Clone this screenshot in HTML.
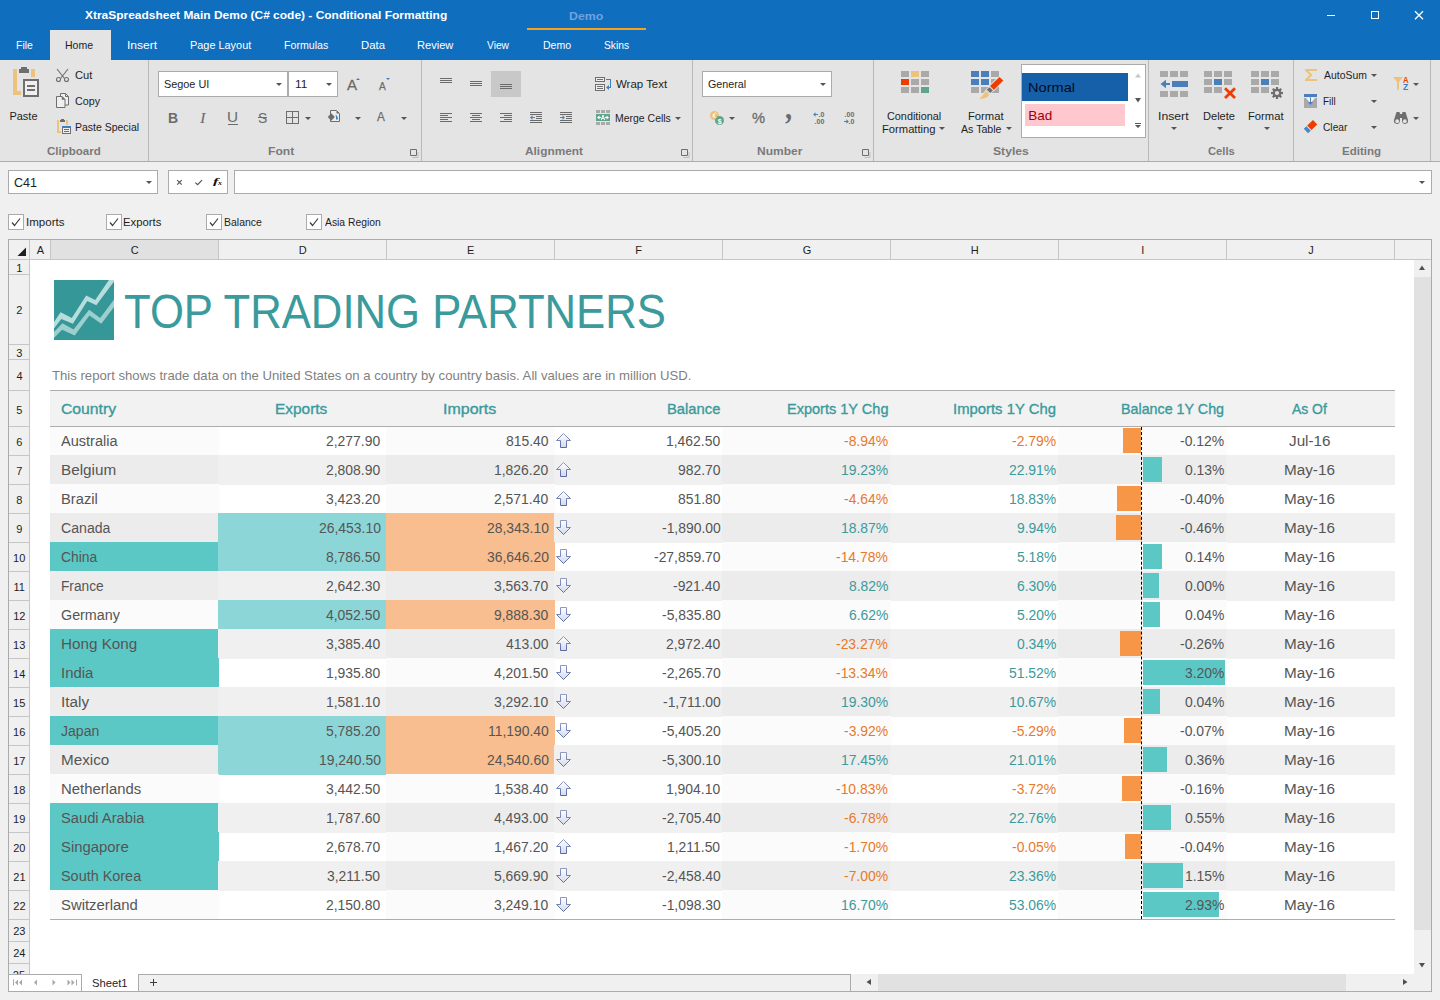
<!DOCTYPE html>
<html lang="en">
<head>
<meta charset="utf-8">
<title>XtraSpreadsheet Main Demo (C# code) - Conditional Formatting</title>
<style>
html,body{margin:0;padding:0;}
body{width:1440px;height:1000px;overflow:hidden;background:#f0f0f0;font-family:'Liberation Sans', sans-serif;position:relative;}
div,span,svg,h1,p,label,button,section,header,footer,nav{position:absolute;margin:0;padding:0;box-sizing:border-box;}
section,header,footer,nav{left:0;top:0;}
.t{white-space:nowrap;line-height:20px;height:20px;transform-origin:0 0;font-weight:normal;}
svg{overflow:visible;}
</style>
</head>
<body>
<header>
<div style="left:0px;top:0px;width:1440px;height:60px;background:#106ebe;"></div>
<h1 class="t" style="left:84.89px;top:5px;font-size:11px;color:#fff;font-weight:bold;transform:scaleX(1.0874);">XtraSpreadsheet Main Demo (C# code) - Conditional Formatting</h1>
<span class="t" style="left:569.17px;top:6px;font-size:11px;color:#6ea3e0;font-weight:bold;transform:scaleX(1.1226);">Demo</span>
<div style="left:527px;top:28px;width:119px;height:2px;background:#f5a31c;"></div>
<svg style="left:1320px;top:5px;" width="110" height="20" viewBox="0 0 110 20"><path d="M7 10.5h8" stroke="#fff" stroke-width="1" fill="none"/><rect x="51.5" y="6.5" width="7" height="7" stroke="#fff" stroke-width="1" fill="none"/><path d="M95 6.200l8 8M103 6.200l-8 8" stroke="#fff" stroke-width="1.300" fill="none"/></svg>
<nav>
<div style="left:50px;top:30px;width:61px;height:30px;background:#e4e4e4;"></div>
<span class="t" style="left:15.64px;top:35px;font-size:11px;color:#fff;transform:scaleX(0.9490);">File</span>
<span class="t" style="left:65.39px;top:35px;font-size:11px;color:#1e1e1e;transform:scaleX(0.9570);">Home</span>
<span class="t" style="left:126.89px;top:35px;font-size:11px;color:#fff;transform:scaleX(1.0979);">Insert</span>
<span class="t" style="left:189.61px;top:35px;font-size:11px;color:#fff;transform:scaleX(0.9911);">Page Layout</span>
<span class="t" style="left:283.63px;top:35px;font-size:11px;color:#fff;transform:scaleX(0.9654);">Formulas</span>
<span class="t" style="left:360.57px;top:35px;font-size:11px;color:#fff;transform:scaleX(1.0299);">Data</span>
<span class="t" style="left:417.34px;top:35px;font-size:11px;color:#fff;transform:scaleX(1.0088);">Review</span>
<span class="t" style="left:487.45px;top:35px;font-size:11px;color:#fff;transform:scaleX(0.9313);">View</span>
<span class="t" style="left:542.89px;top:35px;font-size:11px;color:#fff;transform:scaleX(0.9561);">Demo</span>
<span class="t" style="left:604.03px;top:35px;font-size:11px;color:#fff;transform:scaleX(0.9326);">Skins</span>
</nav>
</header>
<section>
<div style="left:0px;top:60px;width:1440px;height:101px;background:#e4e4e4;"></div>
<div style="left:0px;top:161px;width:1440px;height:1px;background:#adadad;"></div>
<div style="left:148px;top:60px;width:1px;height:101px;background:#b9b9b9;"></div>
<div style="left:421px;top:60px;width:1px;height:101px;background:#b9b9b9;"></div>
<div style="left:692px;top:60px;width:1px;height:101px;background:#b9b9b9;"></div>
<div style="left:873px;top:60px;width:1px;height:101px;background:#b9b9b9;"></div>
<div style="left:1148px;top:60px;width:1px;height:101px;background:#b9b9b9;"></div>
<div style="left:1293px;top:60px;width:1px;height:101px;background:#b9b9b9;"></div>
<div style="left:1430px;top:60px;width:1px;height:101px;background:#b9b9b9;"></div>
<span class="t" style="left:46.73px;top:141px;font-size:11px;color:#7a7a7a;font-weight:bold;transform:scaleX(1.0467);">Clipboard</span>
<span class="t" style="left:268.19px;top:141px;font-size:11px;color:#7a7a7a;font-weight:bold;transform:scaleX(1.1024);">Font</span>
<span class="t" style="left:525.10px;top:141px;font-size:11px;color:#7a7a7a;font-weight:bold;transform:scaleX(1.0793);">Alignment</span>
<span class="t" style="left:757.20px;top:141px;font-size:11px;color:#7a7a7a;font-weight:bold;transform:scaleX(1.0920);">Number</span>
<span class="t" style="left:992.55px;top:141px;font-size:11px;color:#7a7a7a;font-weight:bold;transform:scaleX(1.1062);">Styles</span>
<span class="t" style="left:1207.54px;top:141px;font-size:11px;color:#7a7a7a;font-weight:bold;transform:scaleX(1.0201);">Cells</span>
<span class="t" style="left:1342.43px;top:141px;font-size:11px;color:#7a7a7a;font-weight:bold;transform:scaleX(1.0475);">Editing</span>
<svg style="left:410px;top:149px;" width="9" height="9" viewBox="0 0 9 9"><path d="M0.5 0.5h6v6h-6z" fill="none" stroke="#6e6e6e"/><path d="M8 3v5.5h-5.5" fill="none" stroke="#bdbdbd"/></svg>
<svg style="left:681px;top:149px;" width="9" height="9" viewBox="0 0 9 9"><path d="M0.5 0.5h6v6h-6z" fill="none" stroke="#6e6e6e"/><path d="M8 3v5.5h-5.5" fill="none" stroke="#bdbdbd"/></svg>
<svg style="left:862px;top:149px;" width="9" height="9" viewBox="0 0 9 9"><path d="M0.5 0.5h6v6h-6z" fill="none" stroke="#6e6e6e"/><path d="M8 3v5.5h-5.5" fill="none" stroke="#bdbdbd"/></svg>
<span class="t" style="left:9.40px;top:106px;font-size:11px;color:#1e1e1e;">Paste</span>
<span class="t" style="left:75.23px;top:65px;font-size:11px;color:#1e1e1e;transform:scaleX(1.0134);">Cut</span>
<span class="t" style="left:75.25px;top:91px;font-size:11px;color:#1e1e1e;transform:scaleX(0.9761);">Copy</span>
<span class="t" style="left:74.94px;top:117px;font-size:11px;color:#1e1e1e;transform:scaleX(0.9524);">Paste Special</span>
<div style="left:158px;top:71px;width:130px;height:26px;background:#fff;border:1px solid #ababab;"></div>
<div style="left:288px;top:71px;width:50px;height:26px;background:#fff;border:1px solid #ababab;border-left:1px solid #ababab;"></div>
<span class="t" style="left:164.21px;top:74px;font-size:11px;color:#1e1e1e;transform:scaleX(0.9876);">Segoe UI</span>
<span class="t" style="left:295.10px;top:74px;font-size:11px;color:#1e1e1e;transform:scaleX(1.0753);">11</span>
<svg style="left:276.0px;top:83.0px;" width="6" height="3.0" viewBox="0 0 6 3.0"><path d="M0 0h6l-3.0 3.0z" fill="#555"/></svg>
<svg style="left:326.0px;top:83.0px;" width="6" height="3.0" viewBox="0 0 6 3.0"><path d="M0 0h6l-3.0 3.0z" fill="#555"/></svg>
<span class="t" style="left:167.87px;top:108px;font-size:15px;color:#6b6b6b;font-weight:bold;transform:scaleX(0.9292);">B</span>
<span class="t" style="left:200.06px;top:108px;font-size:15.5px;color:#6b6b6b;font-style:italic;font-family:'Liberation Serif',serif;transform:scaleX(1.0639);">I</span>
<span class="t" style="left:227.42px;top:107px;font-size:14px;color:#6b6b6b;transform:scaleX(1.0943);">U</span>
<div style="left:228px;top:124px;width:10px;height:1px;background:#6b6b6b;"></div>
<span class="t" style="left:257.97px;top:108px;font-size:15px;color:#6b6b6b;transform:scaleX(0.9264);">S</span>
<div style="left:258px;top:117px;width:9px;height:1px;background:#6b6b6b;"></div>
<svg style="left:305.0px;top:117.0px;" width="6" height="3.0" viewBox="0 0 6 3.0"><path d="M0 0h6l-3.0 3.0z" fill="#555"/></svg>
<svg style="left:355.0px;top:117.0px;" width="6" height="3.0" viewBox="0 0 6 3.0"><path d="M0 0h6l-3.0 3.0z" fill="#555"/></svg>
<svg style="left:401.0px;top:117.0px;" width="6" height="3.0" viewBox="0 0 6 3.0"><path d="M0 0h6l-3.0 3.0z" fill="#555"/></svg>
<div style="left:491px;top:71px;width:30px;height:26px;background:#c8c8c8;"></div>
<svg style="left:0px;top:0px;" width="1440" height="160" viewBox="0 0 1440 160"><rect x="440" y="78" width="12" height="1" fill="#6b6b6b"/><rect x="440" y="80" width="12" height="1" fill="#6b6b6b"/><rect x="440" y="82" width="12" height="1" fill="#6b6b6b"/><rect x="470" y="81" width="12" height="1" fill="#6b6b6b"/><rect x="470" y="83" width="12" height="1" fill="#6b6b6b"/><rect x="470" y="85" width="12" height="1" fill="#6b6b6b"/><rect x="500" y="84" width="12" height="1" fill="#6b6b6b"/><rect x="500" y="86" width="12" height="1" fill="#6b6b6b"/><rect x="500" y="88" width="12" height="1" fill="#6b6b6b"/><rect x="440" y="113" width="12" height="1" fill="#6b6b6b"/><rect x="440" y="115" width="8" height="1" fill="#6b6b6b"/><rect x="440" y="117" width="12" height="1" fill="#6b6b6b"/><rect x="440" y="119" width="8" height="1" fill="#6b6b6b"/><rect x="440" y="121" width="12" height="1" fill="#6b6b6b"/><rect x="470" y="113" width="12" height="1" fill="#6b6b6b"/><rect x="472" y="115" width="8" height="1" fill="#6b6b6b"/><rect x="470" y="117" width="12" height="1" fill="#6b6b6b"/><rect x="472" y="119" width="8" height="1" fill="#6b6b6b"/><rect x="470" y="121" width="12" height="1" fill="#6b6b6b"/><rect x="500" y="113" width="12" height="1" fill="#6b6b6b"/><rect x="504" y="115" width="8" height="1" fill="#6b6b6b"/><rect x="500" y="117" width="12" height="1" fill="#6b6b6b"/><rect x="504" y="119" width="8" height="1" fill="#6b6b6b"/><rect x="500" y="121" width="12" height="1" fill="#6b6b6b"/><rect x="530" y="112" width="12" height="1" fill="#6b6b6b"/><rect x="530" y="114" width="12" height="1" fill="#6b6b6b"/><rect x="536" y="116" width="6" height="1" fill="#6b6b6b"/><rect x="536" y="118" width="6" height="1" fill="#6b6b6b"/><rect x="530" y="120" width="12" height="1" fill="#6b6b6b"/><rect x="530" y="122" width="12" height="1" fill="#6b6b6b"/><path d="M530 117.5l2.500-2.500v2h2.500v1h-2.500v2z" fill="#4a86c6"/><rect x="560" y="112" width="12" height="1" fill="#6b6b6b"/><rect x="560" y="114" width="12" height="1" fill="#6b6b6b"/><rect x="566" y="116" width="6" height="1" fill="#6b6b6b"/><rect x="566" y="118" width="6" height="1" fill="#6b6b6b"/><rect x="560" y="120" width="12" height="1" fill="#6b6b6b"/><rect x="560" y="122" width="12" height="1" fill="#6b6b6b"/><path d="M565 117.5l-2.500-2.500v2h-2.500v1h2.500v2z" fill="#4a86c6"/></svg>
<span class="t" style="left:615.75px;top:74px;font-size:11px;color:#1e1e1e;transform:scaleX(1.0410);">Wrap Text</span>
<span class="t" style="left:614.94px;top:108px;font-size:11px;color:#1e1e1e;transform:scaleX(0.9515);">Merge Cells</span>
<svg style="left:675.0px;top:117.0px;" width="6" height="3.0" viewBox="0 0 6 3.0"><path d="M0 0h6l-3.0 3.0z" fill="#555"/></svg>
<div style="left:702px;top:71px;width:130px;height:26px;background:#fff;border:1px solid #ababab;"></div>
<span class="t" style="left:707.96px;top:74px;font-size:11px;color:#1e1e1e;transform:scaleX(0.9750);">General</span>
<svg style="left:820.0px;top:83.0px;" width="6" height="3.0" viewBox="0 0 6 3.0"><path d="M0 0h6l-3.0 3.0z" fill="#555"/></svg>
<svg style="left:729.0px;top:117.0px;" width="6" height="3.0" viewBox="0 0 6 3.0"><path d="M0 0h6l-3.0 3.0z" fill="#555"/></svg>
<span class="t" style="left:752.48px;top:108px;font-size:15.5px;color:#6b6b6b;transform:scaleX(0.9466);-webkit-text-stroke:0.3px #6b6b6b;">%</span>
<span class="t" style="left:785.33px;top:99px;font-size:31px;color:#6b6b6b;font-weight:bold;font-family:'Liberation Serif',serif;transform:scaleX(0.9090);">,</span>
<span class="t" style="left:886.85px;top:106px;font-size:11px;color:#1e1e1e;transform:scaleX(0.9862);">Conditional</span>
<span class="t" style="left:881.58px;top:119px;font-size:11px;color:#1e1e1e;transform:scaleX(1.0184);">Formatting</span>
<svg style="left:939.0px;top:127.0px;" width="6" height="3.0" viewBox="0 0 6 3.0"><path d="M0 0h6l-3.0 3.0z" fill="#555"/></svg>
<span class="t" style="left:968.28px;top:106px;font-size:11px;color:#1e1e1e;transform:scaleX(1.0220);">Format</span>
<span class="t" style="left:960.98px;top:119px;font-size:11px;color:#1e1e1e;transform:scaleX(0.9645);">As Table</span>
<svg style="left:1006.0px;top:127.0px;" width="6" height="3.0" viewBox="0 0 6 3.0"><path d="M0 0h6l-3.0 3.0z" fill="#555"/></svg>
<div style="left:1021px;top:64px;width:125px;height:74px;background:#fff;border:1px solid #ababab;"></div>
<div style="left:1022px;top:73px;width:106px;height:28px;background:#1560a8;"></div>
<span class="t" style="left:1028.20px;top:78px;font-size:13.5px;color:#030c1c;transform:scaleX(1.0796);">Normal</span>
<div style="left:1025px;top:104px;width:100px;height:22px;background:#ffc7ce;"></div>
<span class="t" style="left:1028.29px;top:106px;font-size:13.5px;color:#9c0006;">Bad</span>
<svg style="left:0px;top:0px;" width="1440" height="160" viewBox="0 0 1440 160"><path d="M1135 77.5l3-4l3 4z" fill="#c6c6c6"/><path d="M1135 98h6l-3 4.500z" fill="#555"/><path d="M1135 123h6v1h-6z M1135 125h6l-3 3z" fill="#555"/></svg>
<span class="t" style="left:1157.57px;top:106px;font-size:11px;color:#1e1e1e;transform:scaleX(1.1092);">Insert</span>
<span class="t" style="left:1202.79px;top:106px;font-size:11px;color:#1e1e1e;transform:scaleX(1.0064);">Delete</span>
<span class="t" style="left:1248.48px;top:106px;font-size:11px;color:#1e1e1e;transform:scaleX(1.0191);">Format</span>
<svg style="left:1171.0px;top:127.0px;" width="6" height="3.0" viewBox="0 0 6 3.0"><path d="M0 0h6l-3.0 3.0z" fill="#555"/></svg>
<svg style="left:1217.0px;top:127.0px;" width="6" height="3.0" viewBox="0 0 6 3.0"><path d="M0 0h6l-3.0 3.0z" fill="#555"/></svg>
<svg style="left:1264.0px;top:127.0px;" width="6" height="3.0" viewBox="0 0 6 3.0"><path d="M0 0h6l-3.0 3.0z" fill="#555"/></svg>
<span class="t" style="left:1323.88px;top:65px;font-size:11px;color:#1e1e1e;transform:scaleX(0.9483);">AutoSum</span>
<span class="t" style="left:1323.09px;top:91px;font-size:11px;color:#1e1e1e;transform:scaleX(0.8943);">Fill</span>
<span class="t" style="left:1323.38px;top:117px;font-size:11px;color:#1e1e1e;transform:scaleX(0.9278);">Clear</span>
<svg style="left:1371.0px;top:74.0px;" width="6" height="3.0" viewBox="0 0 6 3.0"><path d="M0 0h6l-3.0 3.0z" fill="#555"/></svg>
<svg style="left:1371.0px;top:100.0px;" width="6" height="3.0" viewBox="0 0 6 3.0"><path d="M0 0h6l-3.0 3.0z" fill="#555"/></svg>
<svg style="left:1371.0px;top:126.0px;" width="6" height="3.0" viewBox="0 0 6 3.0"><path d="M0 0h6l-3.0 3.0z" fill="#555"/></svg>
<svg style="left:1413.0px;top:83.0px;" width="6" height="3.0" viewBox="0 0 6 3.0"><path d="M0 0h6l-3.0 3.0z" fill="#555"/></svg>
<svg style="left:1413.0px;top:117.0px;" width="6" height="3.0" viewBox="0 0 6 3.0"><path d="M0 0h6l-3.0 3.0z" fill="#555"/></svg>
<svg style="left:0px;top:0px;" width="1440" height="160" viewBox="0 0 1440 160"><g shape-rendering="crispEdges"><rect x="13" y="69" width="4" height="26" fill="#ecc27c"/><rect x="13" y="91" width="8" height="4" fill="#ecc27c"/><rect x="31" y="69" width="4" height="8" fill="#ecc27c"/><rect x="21" y="67" width="6" height="2" fill="#6e6e6e"/><rect x="19" y="69" width="10" height="4" fill="#6e6e6e"/><rect x="23" y="79" width="16" height="18" fill="#6e6e6e"/><rect x="25" y="81" width="12" height="14" fill="#efefef"/><rect x="27" y="85" width="8" height="2" fill="#6e6e6e"/><rect x="27" y="89" width="8" height="2" fill="#6e6e6e"/><rect x="57" y="120" width="2" height="13" fill="#ecc27c"/><rect x="57" y="131" width="4" height="2" fill="#ecc27c"/><rect x="66" y="120" width="2" height="5" fill="#ecc27c"/><rect x="61" y="119" width="3" height="1" fill="#6e6e6e"/><rect x="60" y="120" width="5" height="2" fill="#6e6e6e"/><rect x="62" y="126" width="9" height="8" fill="#6e6e6e"/><rect x="63" y="128" width="7" height="5" fill="#efefef"/><rect x="62" y="126" width="9" height="2" fill="#3f7fc1"/><rect x="64" y="129" width="5" height="1" fill="#6e6e6e"/><rect x="64" y="131" width="5" height="1" fill="#6e6e6e"/><path d="M286.5 111.5h12v12h-12zM292.5 111.5v12M286.5 117.5h12" fill="none" stroke="#6e6e6e"/><rect x="595.5" y="77.5" width="9" height="4" fill="#efefef" stroke="#6e6e6e"/><rect x="597" y="79" width="6" height="1" fill="#6e6e6e"/><rect x="595.5" y="84.5" width="9" height="6" fill="#efefef" stroke="#6e6e6e"/><rect x="597" y="86" width="6" height="1" fill="#6e6e6e"/><rect x="597" y="88" width="6" height="1" fill="#6e6e6e"/><path d="M606 79.5h4.5v8h-3" fill="none" stroke="#3f7fc1"/><rect x="596" y="110" width="4" height="3" fill="#a9a9a9"/><rect x="601" y="110" width="4" height="3" fill="#a9a9a9"/><rect x="606" y="110" width="4" height="3" fill="#a9a9a9"/><rect x="596" y="122" width="4" height="3" fill="#a9a9a9"/><rect x="601" y="122" width="4" height="3" fill="#a9a9a9"/><rect x="606" y="122" width="4" height="3" fill="#a9a9a9"/><rect x="596" y="114" width="14" height="7" fill="#5fa58c"/><rect x="901" y="71" width="8" height="6" fill="#a9a9a9"/><rect x="911" y="71" width="8" height="6" fill="#ecc27c"/><rect x="921" y="71" width="8" height="6" fill="#a9a9a9"/><rect x="901" y="79" width="8" height="6" fill="#ee3d00"/><rect x="911" y="79" width="8" height="6" fill="#a9a9a9"/><rect x="921" y="79" width="8" height="6" fill="#a9a9a9"/><rect x="901" y="87" width="8" height="6" fill="#a9a9a9"/><rect x="911" y="87" width="8" height="6" fill="#a9a9a9"/><rect x="921" y="87" width="8" height="6" fill="#5fa58c"/><rect x="971" y="71" width="8" height="6" fill="#4a7fbc"/><rect x="981" y="71" width="8" height="6" fill="#4a7fbc"/><rect x="991" y="71" width="8" height="6" fill="#a9a9a9"/><rect x="971" y="79" width="8" height="6" fill="#4a7fbc"/><rect x="981" y="79" width="8" height="6" fill="#4a7fbc"/><rect x="991" y="79" width="8" height="6" fill="#a9a9a9"/><rect x="971" y="87" width="8" height="6" fill="#a9a9a9"/><rect x="981" y="87" width="8" height="6" fill="#a9a9a9"/><rect x="991" y="87" width="8" height="6" fill="#a9a9a9"/><rect x="1160" y="71" width="8" height="6" fill="#a9a9a9"/><rect x="1170" y="71" width="8" height="6" fill="#a9a9a9"/><rect x="1180" y="71" width="8" height="6" fill="#a9a9a9"/><rect x="1160" y="91" width="8" height="6" fill="#a9a9a9"/><rect x="1170" y="91" width="8" height="6" fill="#a9a9a9"/><rect x="1180" y="91" width="8" height="6" fill="#a9a9a9"/><rect x="1172" y="81" width="16" height="6" fill="#4a7fbc"/><rect x="1165" y="83" width="5" height="2" fill="#4a7fbc"/><rect x="1204" y="71" width="8" height="6" fill="#a9a9a9"/><rect x="1214" y="71" width="8" height="6" fill="#a9a9a9"/><rect x="1224" y="71" width="8" height="6" fill="#a9a9a9"/><rect x="1204" y="79" width="8" height="6" fill="#a9a9a9"/><rect x="1214" y="79" width="8" height="6" fill="#4a7fbc"/><rect x="1224" y="79" width="8" height="6" fill="#a9a9a9"/><rect x="1204" y="87" width="8" height="6" fill="#a9a9a9"/><rect x="1214" y="87" width="8" height="6" fill="#a9a9a9"/><rect x="1251" y="71" width="8" height="6" fill="#a9a9a9"/><rect x="1261" y="71" width="8" height="6" fill="#a9a9a9"/><rect x="1271" y="71" width="8" height="6" fill="#a9a9a9"/><rect x="1251" y="79" width="8" height="6" fill="#a9a9a9"/><rect x="1261" y="79" width="8" height="6" fill="#4a7fbc"/><rect x="1271" y="79" width="8" height="6" fill="#a9a9a9"/><rect x="1251" y="87" width="8" height="6" fill="#a9a9a9"/><rect x="1261" y="87" width="8" height="6" fill="#a9a9a9"/><rect x="1304" y="94" width="13" height="3" fill="#4a7fbc"/><rect x="1304" y="98" width="13" height="10" fill="#a9a9a9"/></g><path d="M606 87.500l3-2.500v5z" fill="#3f7fc1"/><path d="M597 117.5l2.5-2v1.5h1.5v1h-1.5v1.500z M609 117.5l-2.5-2v1.5h-1.5v1h1.5v1.5z" fill="#fff"/><path d="M601.3 120l1.700-5l1.700 5M601.9 118.5h2.200" fill="none" stroke="#fff" stroke-width="0.9"/><path d="M57 69l7.500 9.500M68 69l-7.500 9.500" fill="none" stroke="#6e6e6e" stroke-width="1.100"/><circle cx="58.5" cy="79.5" r="2" fill="none" stroke="#6e6e6e" stroke-width="1.100"/><circle cx="66.5" cy="79.5" r="2" fill="none" stroke="#6e6e6e" stroke-width="1.100"/><path d="M60.5 93.500h5l3 3v8.500h-8z" fill="#efefef" stroke="#6e6e6e"/><path d="M65.500 93.500v3h3" fill="none" stroke="#6e6e6e"/><path d="M56.500 96.500h5.500l3 3v8h-8.500z" fill="#efefef" stroke="#6e6e6e"/><path d="M62 96.500v3h3z" fill="#6e6e6e" stroke="#6e6e6e" stroke-width="0.500"/><path d="M356 80l2-2l2 2z" fill="#3f7fc1"/><path d="M386 78h4l-2 2z" fill="#3f7fc1"/><path d="M330.500 110.500h6l3 3v8h-9z" fill="#efefef" stroke="#6e6e6e"/><path d="M336.500 110.500v3h3z" fill="#6e6e6e"/><path d="M327.700 117l3.600-3.800l3.600 3.800l-3.600 3.800z" fill="#6e6e6e"/><path d="M335.500 114.500c1.500 1 2.500 2.500 2.500 5h-2c0.300-1.500 0-3-0.500-5z" fill="#3f7fc1"/><circle cx="714.500" cy="115.500" r="4.500" fill="#ecc27c"/><circle cx="719.500" cy="120.500" r="4.500" fill="#5fa58c"/><path d="M716.500 113.500c-1.500-0.800-3.200 0-3.200 2s1.700 2.800 3.200 2M712.500 114.900h2.500M712.500 116.200h2.500" fill="none" stroke="#fff" stroke-width="0.800"/><path d="M813.200 114.500l2.300-2.300v1.800h2.500v1h-2.500v1.800z" fill="#3f7fc1"/><path d="M848.800 121.500l-2.300-2.300v1.800h-2.500v1h2.500v1.800z" fill="#3f7fc1"/><path d="M999.500 76.900L1003.300 80.500L993.800 90L990 85.900z" fill="#ee3d00" stroke="#e4e4e4" stroke-width="1.6" paint-order="stroke"/><path d="M989.700 87.300l3.200 3.100l-2.700 2.700l-3.400-3.600z" fill="#6e6e6e" stroke="#e4e4e4" stroke-width="1.6" paint-order="stroke"/><path d="M985.800 91.200l3.500 3.500c-1.500 2.700-5 4.300-10.400 3.900c3.600-1.600 4.300-4.900 6.900-7.400z" fill="#ecc27c" stroke="#e4e4e4" stroke-width="1.6" paint-order="stroke"/><path d="M1160.500 84l5.500-4.200v8.400z" fill="#4a7fbc"/><path d="M1225 88.200l10 9.800M1235 88.200l-10 9.800" fill="none" stroke="#ee3d00" stroke-width="2.800"/><g transform="translate(1277 93)"><rect x="-1.100" y="-6" width="2.200" height="3" fill="#6e6e6e" transform="rotate(0)"/><rect x="-1.100" y="-6" width="2.200" height="3" fill="#6e6e6e" transform="rotate(45)"/><rect x="-1.100" y="-6" width="2.200" height="3" fill="#6e6e6e" transform="rotate(90)"/><rect x="-1.100" y="-6" width="2.200" height="3" fill="#6e6e6e" transform="rotate(135)"/><rect x="-1.100" y="-6" width="2.200" height="3" fill="#6e6e6e" transform="rotate(180)"/><rect x="-1.100" y="-6" width="2.200" height="3" fill="#6e6e6e" transform="rotate(225)"/><rect x="-1.100" y="-6" width="2.200" height="3" fill="#6e6e6e" transform="rotate(270)"/><rect x="-1.100" y="-6" width="2.200" height="3" fill="#6e6e6e" transform="rotate(315)"/><circle r="3.200" fill="none" stroke="#6e6e6e" stroke-width="2.200"/></g><path d="M1305 69h12v2h-8.500l4 4l-4 4h8.500v2h-12v-1.500l4.700-4.500l-4.700-4.500z" fill="#ecc27c"/><path d="M1306 98h9l-4.500 5.500z" fill="#f4f4f4"/><path d="M1310.500 97.500v6" stroke="#4a7fbc" fill="none"/><path d="M1308 102h5l-2.500 3z" fill="#4a7fbc"/><path d="M1313 120l4.200 4.500l-5.700 5.500l-4.300-4.500z" fill="#ee3d00"/><path d="M1306.500 126.200l4.300 4.500l-2.800 2.600l-4.200-4.500z" fill="#4a86c6"/><path d="M1393 77h10l-4 5v7l-2 1.500v-8.500z" fill="#ecc27c"/><path d="M1396.500 112h3l0.500 2h2l0.500-2h3l2.500 8a3 3 0 0 1-6 1.500v-3.500h-2v3.500a3 3 0 0 1-6-1.500z" fill="#6e6e6e"/><circle cx="1397.200" cy="121.200" r="1.900" fill="#e4e4e4"/><circle cx="1404.800" cy="121.200" r="1.900" fill="#e4e4e4"/></svg>
<span class="t" style="left:346.97px;top:75px;font-size:15px;color:#6b6b6b;transform:scaleX(1.0054);-webkit-text-stroke:0.3px #6b6b6b;">A</span>
<span class="t" style="left:379.28px;top:76px;font-size:11px;color:#6b6b6b;transform:scaleX(0.9186);-webkit-text-stroke:0.25px #6b6b6b;">A</span>
<span class="t" style="left:377.18px;top:107px;font-size:12.5px;color:#6b6b6b;transform:scaleX(0.9411);-webkit-text-stroke:0.25px #6b6b6b;">A</span>
<span class="t" style="left:717.66px;top:111.5px;font-size:7px;color:#fff;font-weight:bold;">$</span>
<span class="t" style="left:818.45px;top:105px;font-size:7px;color:#6b6b6b;font-weight:bold;">.0</span>
<span class="t" style="left:814.56px;top:112px;font-size:7px;color:#6b6b6b;font-weight:bold;">.00</span>
<span class="t" style="left:844.56px;top:105px;font-size:7px;color:#6b6b6b;font-weight:bold;">.00</span>
<span class="t" style="left:848.45px;top:112px;font-size:7px;color:#6b6b6b;font-weight:bold;">.0</span>
<span class="t" style="left:1402.81px;top:70px;font-size:8.5px;color:#ee3d00;font-weight:bold;transform:scaleX(0.9119);">A</span>
<span class="t" style="left:1403.05px;top:77px;font-size:8.5px;color:#3f7fc1;font-weight:bold;">Z</span>
</section>
<section>
<div style="left:8px;top:170px;width:150px;height:24px;background:#fff;border:1px solid #ababab;"></div>
<span class="t" style="left:13.56px;top:173px;font-size:13px;color:#1e1e1e;transform:scaleX(0.9666);">C41</span>
<svg style="left:146.0px;top:181.0px;" width="6" height="3.0" viewBox="0 0 6 3.0"><path d="M0 0h6l-3.0 3.0z" fill="#555"/></svg>
<div style="left:168px;top:170px;width:60px;height:24px;background:#fff;border:1px solid #ababab;"></div>
<svg style="left:168px;top:170px;" width="60" height="24" viewBox="0 0 60 24"><path d="M9.200 10.200l4.500 4.500M13.700 10.200l-4.500 4.500" stroke="#555" stroke-width="1.200" fill="none"/><path d="M27.300 12.600l2.300 2.100l4.400-4.600" stroke="#555" stroke-width="1.200" fill="none"/></svg>
<span class="t" style="left:213.10px;top:170.5px;font-size:8.5px;color:#111;font-weight:bold;font-style:italic;font-family:'Liberation Serif',serif;transform:scaleX(1.9513);">f</span>
<span class="t" style="left:218.30px;top:173px;font-size:7px;color:#111;font-weight:bold;font-style:italic;font-family:'Liberation Serif',serif;transform:scaleX(1.1129);">x</span>
<div style="left:234px;top:170px;width:1198px;height:24px;background:#fff;border:1px solid #ababab;"></div>
<svg style="left:1419.0px;top:181.0px;" width="6" height="3.0" viewBox="0 0 6 3.0"><path d="M0 0h6l-3.0 3.0z" fill="#555"/></svg>
</section>
<section>
<div style="left:8px;top:214px;width:16px;height:16px;background:#fff;border:1px solid #ababab;"></div>
<svg style="left:8px;top:214px;" width="16" height="16" viewBox="0 0 16 16"><path d="M4 8.5l2.5 3l5.5-7" stroke="#3c3c3c" stroke-width="1.2" fill="none"/></svg>
<label class="t" style="left:25.53px;top:212px;font-size:11px;color:#1e1e1e;transform:scaleX(1.0493);">Imports</label>
<div style="left:106px;top:214px;width:16px;height:16px;background:#fff;border:1px solid #ababab;"></div>
<svg style="left:106px;top:214px;" width="16" height="16" viewBox="0 0 16 16"><path d="M4 8.5l2.5 3l5.5-7" stroke="#3c3c3c" stroke-width="1.2" fill="none"/></svg>
<label class="t" style="left:123.47px;top:212px;font-size:11px;color:#1e1e1e;transform:scaleX(1.0280);">Exports</label>
<div style="left:206px;top:214px;width:16px;height:16px;background:#fff;border:1px solid #ababab;"></div>
<svg style="left:206px;top:214px;" width="16" height="16" viewBox="0 0 16 16"><path d="M4 8.5l2.5 3l5.5-7" stroke="#3c3c3c" stroke-width="1.2" fill="none"/></svg>
<label class="t" style="left:223.74px;top:212px;font-size:11px;color:#1e1e1e;transform:scaleX(0.9515);">Balance</label>
<div style="left:306px;top:214px;width:16px;height:16px;background:#fff;border:1px solid #ababab;"></div>
<svg style="left:306px;top:214px;" width="16" height="16" viewBox="0 0 16 16"><path d="M4 8.5l2.5 3l5.5-7" stroke="#3c3c3c" stroke-width="1.2" fill="none"/></svg>
<label class="t" style="left:324.98px;top:212px;font-size:11px;color:#1e1e1e;transform:scaleX(0.9389);">Asia Region</label>
</section>
<section>
<div style="left:8px;top:239px;width:1424px;height:753px;background:#fff;border:1px solid #ababab;"></div>
<div style="left:9px;top:240px;width:1422px;height:19px;background:#f0f0f0;"></div>
<div style="left:9px;top:259px;width:1422px;height:1px;background:#c6c6c6;"></div>
<div style="left:51px;top:240px;width:167px;height:19px;background:#e1e1e1;"></div>
<div style="left:29px;top:240px;width:1px;height:20px;background:#c6c6c6;"></div>
<div style="left:50px;top:240px;width:1px;height:20px;background:#c6c6c6;"></div>
<span class="t" style="left:36.63px;top:240px;font-size:11px;color:#1e1e1e;">A</span>
<div style="left:218px;top:240px;width:1px;height:20px;background:#c6c6c6;"></div>
<span class="t" style="left:130.76px;top:240px;font-size:11px;color:#1e1e1e;">C</span>
<div style="left:386px;top:240px;width:1px;height:20px;background:#c6c6c6;"></div>
<span class="t" style="left:298.64px;top:240px;font-size:11px;color:#1e1e1e;">D</span>
<div style="left:554px;top:240px;width:1px;height:20px;background:#c6c6c6;"></div>
<span class="t" style="left:466.92px;top:240px;font-size:11px;color:#1e1e1e;">E</span>
<div style="left:722px;top:240px;width:1px;height:20px;background:#c6c6c6;"></div>
<span class="t" style="left:635.21px;top:240px;font-size:11px;color:#1e1e1e;">F</span>
<div style="left:890px;top:240px;width:1px;height:20px;background:#c6c6c6;"></div>
<span class="t" style="left:802.66px;top:240px;font-size:11px;color:#1e1e1e;">G</span>
<div style="left:1058px;top:240px;width:1px;height:20px;background:#c6c6c6;"></div>
<span class="t" style="left:970.83px;top:240px;font-size:11px;color:#1e1e1e;">H</span>
<div style="left:1226px;top:240px;width:1px;height:20px;background:#c6c6c6;"></div>
<span class="t" style="left:1141.27px;top:240px;font-size:11px;color:#1e1e1e;">I</span>
<div style="left:1394px;top:240px;width:1px;height:20px;background:#c6c6c6;"></div>
<span class="t" style="left:1308.37px;top:240px;font-size:11px;color:#1e1e1e;">J</span>
<svg style="left:17px;top:247px;" width="10" height="10" viewBox="0 0 10 10"><path d="M9 0.5v8.5h-8.5z" fill="#1e1e1e"/></svg>
<div style="left:9px;top:260px;width:20px;height:714px;background:#f0f0f0;"></div>
<div style="left:29px;top:260px;width:1px;height:714px;background:#c6c6c6;"></div>
<div style="left:9px;top:274px;width:20px;height:1px;background:#c6c6c6;"></div>
<span class="t" style="left:16.19px;top:258px;font-size:11px;color:#1e1e1e;">1</span>
<div style="left:9px;top:344px;width:20px;height:1px;background:#c6c6c6;"></div>
<span class="t" style="left:16.34px;top:300px;font-size:11px;color:#1e1e1e;">2</span>
<div style="left:9px;top:359px;width:20px;height:1px;background:#c6c6c6;"></div>
<span class="t" style="left:16.37px;top:343px;font-size:11px;color:#1e1e1e;">3</span>
<div style="left:9px;top:390px;width:20px;height:1px;background:#c6c6c6;"></div>
<span class="t" style="left:16.38px;top:366px;font-size:11px;color:#1e1e1e;">4</span>
<div style="left:9px;top:426px;width:20px;height:1px;background:#c6c6c6;"></div>
<span class="t" style="left:16.35px;top:400px;font-size:11px;color:#1e1e1e;">5</span>
<div style="left:9px;top:455px;width:20px;height:1px;background:#c6c6c6;"></div>
<span class="t" style="left:16.30px;top:432px;font-size:11px;color:#1e1e1e;">6</span>
<div style="left:9px;top:484px;width:20px;height:1px;background:#c6c6c6;"></div>
<span class="t" style="left:16.34px;top:461px;font-size:11px;color:#1e1e1e;">7</span>
<div style="left:9px;top:513px;width:20px;height:1px;background:#c6c6c6;"></div>
<span class="t" style="left:16.34px;top:490px;font-size:11px;color:#1e1e1e;">8</span>
<div style="left:9px;top:542px;width:20px;height:1px;background:#c6c6c6;"></div>
<span class="t" style="left:16.34px;top:519px;font-size:11px;color:#1e1e1e;">9</span>
<div style="left:9px;top:571px;width:20px;height:1px;background:#c6c6c6;"></div>
<span class="t" style="left:13.08px;top:548px;font-size:11px;color:#1e1e1e;">10</span>
<div style="left:9px;top:600px;width:20px;height:1px;background:#c6c6c6;"></div>
<span class="t" style="left:13.54px;top:577px;font-size:11px;color:#1e1e1e;">11</span>
<div style="left:9px;top:629px;width:20px;height:1px;background:#c6c6c6;"></div>
<span class="t" style="left:13.14px;top:606px;font-size:11px;color:#1e1e1e;">12</span>
<div style="left:9px;top:658px;width:20px;height:1px;background:#c6c6c6;"></div>
<span class="t" style="left:13.11px;top:635px;font-size:11px;color:#1e1e1e;">13</span>
<div style="left:9px;top:687px;width:20px;height:1px;background:#c6c6c6;"></div>
<span class="t" style="left:13.02px;top:664px;font-size:11px;color:#1e1e1e;">14</span>
<div style="left:9px;top:716px;width:20px;height:1px;background:#c6c6c6;"></div>
<span class="t" style="left:13.09px;top:693px;font-size:11px;color:#1e1e1e;">15</span>
<div style="left:9px;top:745px;width:20px;height:1px;background:#c6c6c6;"></div>
<span class="t" style="left:13.11px;top:722px;font-size:11px;color:#1e1e1e;">16</span>
<div style="left:9px;top:774px;width:20px;height:1px;background:#c6c6c6;"></div>
<span class="t" style="left:13.14px;top:751px;font-size:11px;color:#1e1e1e;">17</span>
<div style="left:9px;top:803px;width:20px;height:1px;background:#c6c6c6;"></div>
<span class="t" style="left:13.10px;top:780px;font-size:11px;color:#1e1e1e;">18</span>
<div style="left:9px;top:832px;width:20px;height:1px;background:#c6c6c6;"></div>
<span class="t" style="left:13.12px;top:809px;font-size:11px;color:#1e1e1e;">19</span>
<div style="left:9px;top:861px;width:20px;height:1px;background:#c6c6c6;"></div>
<span class="t" style="left:13.22px;top:838px;font-size:11px;color:#1e1e1e;">20</span>
<div style="left:9px;top:890px;width:20px;height:1px;background:#c6c6c6;"></div>
<span class="t" style="left:13.27px;top:867px;font-size:11px;color:#1e1e1e;">21</span>
<div style="left:9px;top:919px;width:20px;height:1px;background:#c6c6c6;"></div>
<span class="t" style="left:13.28px;top:896px;font-size:11px;color:#1e1e1e;">22</span>
<div style="left:9px;top:941px;width:20px;height:1px;background:#c6c6c6;"></div>
<span class="t" style="left:13.25px;top:921px;font-size:11px;color:#1e1e1e;">23</span>
<div style="left:9px;top:963px;width:20px;height:1px;background:#c6c6c6;"></div>
<span class="t" style="left:13.17px;top:943px;font-size:11px;color:#1e1e1e;">24</span>
<div style="left:9px;top:964px;width:20px;height:10px;overflow:hidden">
<span class="t" style="left:3.84px;top:1px;font-size:11px;color:#1e1e1e;">25</span>
</div>
<svg style="left:54px;top:280px;" width="60" height="60" viewBox="0 0 60 60"><rect width="60" height="60" fill="#359798"/><path d="M0 41.900L6.600 32.200L17.800 37.900L32.200 15.600L41.200 19.900L54.900 0L60 0L60 1.600L42.300 25.300L33.300 21L18.900 43.700L7.300 39L0 48.400z" fill="#b8dddd"/><path d="M0 52L8.400 43.300L19.600 49.500L35.100 29.700L46.200 37.900L60 19.600L60 27.100L47.300 43.700L35.400 35.600L20.700 55.600L8.100 49.800L0 58.100z" fill="#9dcfce"/></svg>
<h1 class="t" style="left:123.52px;top:302px;font-size:48px;color:#3a9a9c;transform:scaleX(0.9097);">TOP TRADING PARTNERS</h1>
<p class="t" style="left:52.10px;top:366px;font-size:13.33px;color:#7f7f7f;transform:scaleX(0.9864);">This report shows trade data on the United States on a country by country basis. All values are in million USD.</p>
<div style="left:50px;top:390px;width:1345px;height:1px;background:#adadad;"></div>
<div style="left:50px;top:391px;width:1345px;height:35px;background:#f2f2f2;"></div>
<span class="t" style="left:60.90px;top:399px;font-size:15px;color:#3a9a9c;transform:scaleX(1.0477);-webkit-text-stroke:0.35px #3a9a9c;">Country</span>
<span class="t" style="left:275.13px;top:399px;font-size:15px;color:#3a9a9c;transform:scaleX(1.0289);-webkit-text-stroke:0.35px #3a9a9c;">Exports</span>
<span class="t" style="left:443.23px;top:399px;font-size:15px;color:#3a9a9c;transform:scaleX(1.0648);-webkit-text-stroke:0.35px #3a9a9c;">Imports</span>
<span class="t" style="left:666.89px;top:399px;font-size:15px;color:#3a9a9c;transform:scaleX(0.9845);-webkit-text-stroke:0.35px #3a9a9c;">Balance</span>
<span class="t" style="left:786.51px;top:399px;font-size:15px;color:#3a9a9c;transform:scaleX(0.9684);-webkit-text-stroke:0.35px #3a9a9c;">Exports 1Y Chg</span>
<span class="t" style="left:953.03px;top:399px;font-size:15px;color:#3a9a9c;transform:scaleX(0.9906);-webkit-text-stroke:0.35px #3a9a9c;">Imports 1Y Chg</span>
<span class="t" style="left:1120.93px;top:399px;font-size:15px;color:#3a9a9c;transform:scaleX(0.9528);-webkit-text-stroke:0.35px #3a9a9c;">Balance 1Y Chg</span>
<span class="t" style="left:1292.07px;top:399px;font-size:15px;color:#3a9a9c;transform:scaleX(0.9280);-webkit-text-stroke:0.35px #3a9a9c;">As Of</span>
<svg width="0" height="0" style="left:0;top:0"><defs><linearGradient id="ag" x1="0" y1="0" x2="0" y2="1"><stop offset="0" stop-color="#ffffff"/><stop offset="1" stop-color="#d3d9ee"/></linearGradient><linearGradient id="as" x1="0" y1="0" x2="0" y2="1"><stop offset="0" stop-color="#8d99c6"/><stop offset="1" stop-color="#5b6aa2"/></linearGradient></defs></svg>
<div style="left:50px;top:426px;width:169px;height:30px;background:#fbfbfb;"></div>
<div style="left:386px;top:426px;width:169px;height:30px;background:#fbfbfb;"></div>
<div style="left:722px;top:426px;width:169px;height:30px;background:#fbfbfb;"></div>
<div style="left:1058px;top:426px;width:169px;height:30px;background:#fbfbfb;"></div>
<div style="left:50px;top:455px;width:169px;height:30px;background:#ececec;"></div>
<div style="left:218px;top:455px;width:169px;height:30px;background:#f0f0f0;"></div>
<div style="left:386px;top:455px;width:169px;height:30px;background:#ececec;"></div>
<div style="left:554px;top:455px;width:169px;height:30px;background:#f0f0f0;"></div>
<div style="left:722px;top:455px;width:169px;height:30px;background:#ececec;"></div>
<div style="left:890px;top:455px;width:169px;height:30px;background:#f0f0f0;"></div>
<div style="left:1058px;top:455px;width:169px;height:30px;background:#ececec;"></div>
<div style="left:1226px;top:455px;width:169px;height:30px;background:#f0f0f0;"></div>
<div style="left:50px;top:484px;width:169px;height:30px;background:#fbfbfb;"></div>
<div style="left:386px;top:484px;width:169px;height:30px;background:#fbfbfb;"></div>
<div style="left:722px;top:484px;width:169px;height:30px;background:#fbfbfb;"></div>
<div style="left:1058px;top:484px;width:169px;height:30px;background:#fbfbfb;"></div>
<div style="left:50px;top:513px;width:169px;height:30px;background:#ececec;"></div>
<div style="left:218px;top:513px;width:169px;height:30px;background:#8dd6d8;"></div>
<div style="left:386px;top:513px;width:169px;height:30px;background:#f9be8f;"></div>
<div style="left:554px;top:513px;width:169px;height:30px;background:#f0f0f0;"></div>
<div style="left:722px;top:513px;width:169px;height:30px;background:#ececec;"></div>
<div style="left:890px;top:513px;width:169px;height:30px;background:#f0f0f0;"></div>
<div style="left:1058px;top:513px;width:169px;height:30px;background:#ececec;"></div>
<div style="left:1226px;top:513px;width:169px;height:30px;background:#f0f0f0;"></div>
<div style="left:50px;top:542px;width:169px;height:30px;background:#5cc8c6;"></div>
<div style="left:218px;top:542px;width:169px;height:30px;background:#8dd6d8;"></div>
<div style="left:386px;top:542px;width:169px;height:30px;background:#f9be8f;"></div>
<div style="left:722px;top:542px;width:169px;height:30px;background:#fbfbfb;"></div>
<div style="left:1058px;top:542px;width:169px;height:30px;background:#fbfbfb;"></div>
<div style="left:50px;top:571px;width:169px;height:30px;background:#ececec;"></div>
<div style="left:218px;top:571px;width:169px;height:30px;background:#f0f0f0;"></div>
<div style="left:386px;top:571px;width:169px;height:30px;background:#ececec;"></div>
<div style="left:554px;top:571px;width:169px;height:30px;background:#f0f0f0;"></div>
<div style="left:722px;top:571px;width:169px;height:30px;background:#ececec;"></div>
<div style="left:890px;top:571px;width:169px;height:30px;background:#f0f0f0;"></div>
<div style="left:1058px;top:571px;width:169px;height:30px;background:#ececec;"></div>
<div style="left:1226px;top:571px;width:169px;height:30px;background:#f0f0f0;"></div>
<div style="left:50px;top:600px;width:169px;height:30px;background:#fbfbfb;"></div>
<div style="left:218px;top:600px;width:169px;height:30px;background:#8dd6d8;"></div>
<div style="left:386px;top:600px;width:169px;height:30px;background:#f9be8f;"></div>
<div style="left:722px;top:600px;width:169px;height:30px;background:#fbfbfb;"></div>
<div style="left:1058px;top:600px;width:169px;height:30px;background:#fbfbfb;"></div>
<div style="left:50px;top:629px;width:169px;height:30px;background:#5cc8c6;"></div>
<div style="left:218px;top:629px;width:169px;height:30px;background:#f0f0f0;"></div>
<div style="left:386px;top:629px;width:169px;height:30px;background:#ececec;"></div>
<div style="left:554px;top:629px;width:169px;height:30px;background:#f0f0f0;"></div>
<div style="left:722px;top:629px;width:169px;height:30px;background:#ececec;"></div>
<div style="left:890px;top:629px;width:169px;height:30px;background:#f0f0f0;"></div>
<div style="left:1058px;top:629px;width:169px;height:30px;background:#ececec;"></div>
<div style="left:1226px;top:629px;width:169px;height:30px;background:#f0f0f0;"></div>
<div style="left:50px;top:658px;width:169px;height:30px;background:#5cc8c6;"></div>
<div style="left:386px;top:658px;width:169px;height:30px;background:#fbfbfb;"></div>
<div style="left:722px;top:658px;width:169px;height:30px;background:#fbfbfb;"></div>
<div style="left:1058px;top:658px;width:169px;height:30px;background:#fbfbfb;"></div>
<div style="left:50px;top:687px;width:169px;height:30px;background:#ececec;"></div>
<div style="left:218px;top:687px;width:169px;height:30px;background:#f0f0f0;"></div>
<div style="left:386px;top:687px;width:169px;height:30px;background:#ececec;"></div>
<div style="left:554px;top:687px;width:169px;height:30px;background:#f0f0f0;"></div>
<div style="left:722px;top:687px;width:169px;height:30px;background:#ececec;"></div>
<div style="left:890px;top:687px;width:169px;height:30px;background:#f0f0f0;"></div>
<div style="left:1058px;top:687px;width:169px;height:30px;background:#ececec;"></div>
<div style="left:1226px;top:687px;width:169px;height:30px;background:#f0f0f0;"></div>
<div style="left:50px;top:716px;width:169px;height:30px;background:#5cc8c6;"></div>
<div style="left:218px;top:716px;width:169px;height:30px;background:#8dd6d8;"></div>
<div style="left:386px;top:716px;width:169px;height:30px;background:#f9be8f;"></div>
<div style="left:722px;top:716px;width:169px;height:30px;background:#fbfbfb;"></div>
<div style="left:1058px;top:716px;width:169px;height:30px;background:#fbfbfb;"></div>
<div style="left:50px;top:745px;width:169px;height:30px;background:#ececec;"></div>
<div style="left:218px;top:745px;width:169px;height:30px;background:#8dd6d8;"></div>
<div style="left:386px;top:745px;width:169px;height:30px;background:#f9be8f;"></div>
<div style="left:554px;top:745px;width:169px;height:30px;background:#f0f0f0;"></div>
<div style="left:722px;top:745px;width:169px;height:30px;background:#ececec;"></div>
<div style="left:890px;top:745px;width:169px;height:30px;background:#f0f0f0;"></div>
<div style="left:1058px;top:745px;width:169px;height:30px;background:#ececec;"></div>
<div style="left:1226px;top:745px;width:169px;height:30px;background:#f0f0f0;"></div>
<div style="left:50px;top:774px;width:169px;height:30px;background:#fbfbfb;"></div>
<div style="left:386px;top:774px;width:169px;height:30px;background:#fbfbfb;"></div>
<div style="left:722px;top:774px;width:169px;height:30px;background:#fbfbfb;"></div>
<div style="left:1058px;top:774px;width:169px;height:30px;background:#fbfbfb;"></div>
<div style="left:50px;top:803px;width:169px;height:30px;background:#5cc8c6;"></div>
<div style="left:218px;top:803px;width:169px;height:30px;background:#f0f0f0;"></div>
<div style="left:386px;top:803px;width:169px;height:30px;background:#ececec;"></div>
<div style="left:554px;top:803px;width:169px;height:30px;background:#f0f0f0;"></div>
<div style="left:722px;top:803px;width:169px;height:30px;background:#ececec;"></div>
<div style="left:890px;top:803px;width:169px;height:30px;background:#f0f0f0;"></div>
<div style="left:1058px;top:803px;width:169px;height:30px;background:#ececec;"></div>
<div style="left:1226px;top:803px;width:169px;height:30px;background:#f0f0f0;"></div>
<div style="left:50px;top:832px;width:169px;height:30px;background:#5cc8c6;"></div>
<div style="left:386px;top:832px;width:169px;height:30px;background:#fbfbfb;"></div>
<div style="left:722px;top:832px;width:169px;height:30px;background:#fbfbfb;"></div>
<div style="left:1058px;top:832px;width:169px;height:30px;background:#fbfbfb;"></div>
<div style="left:50px;top:861px;width:169px;height:30px;background:#5cc8c6;"></div>
<div style="left:218px;top:861px;width:169px;height:30px;background:#f0f0f0;"></div>
<div style="left:386px;top:861px;width:169px;height:30px;background:#ececec;"></div>
<div style="left:554px;top:861px;width:169px;height:30px;background:#f0f0f0;"></div>
<div style="left:722px;top:861px;width:169px;height:30px;background:#ececec;"></div>
<div style="left:890px;top:861px;width:169px;height:30px;background:#f0f0f0;"></div>
<div style="left:1058px;top:861px;width:169px;height:30px;background:#ececec;"></div>
<div style="left:1226px;top:861px;width:169px;height:30px;background:#f0f0f0;"></div>
<div style="left:50px;top:890px;width:169px;height:30px;background:#fbfbfb;"></div>
<div style="left:386px;top:890px;width:169px;height:30px;background:#fbfbfb;"></div>
<div style="left:722px;top:890px;width:169px;height:30px;background:#fbfbfb;"></div>
<div style="left:1058px;top:890px;width:169px;height:30px;background:#fbfbfb;"></div>
<div style="left:50px;top:426px;width:1345px;height:1px;background:#adadad;"></div>
<div style="left:50px;top:919px;width:1345px;height:1px;background:#adadad;"></div>
<div style="left:1123px;top:428px;width:18px;height:25px;background:#f79646;"></div>
<span class="t" style="left:61.27px;top:431px;font-size:15.5px;color:#555;transform:scaleX(0.9374);">Australia</span>
<span class="t" style="left:326.41px;top:431px;font-size:15.5px;color:#555;transform:scaleX(0.8972);">2,277.90</span>
<span class="t" style="left:506.01px;top:431px;font-size:15.5px;color:#555;transform:scaleX(0.8972);">815.40</span>
<svg style="left:556px;top:433px;" width="16" height="16" viewBox="0 0 16 16"><path d="M7.500 0.500L14.500 7.500H10.500V14.500H4.500V7.500H0.500Z" fill="url(#ag)" stroke="url(#as)" stroke-width="1" stroke-linejoin="round"/></svg>
<span class="t" style="left:666.41px;top:431px;font-size:15.5px;color:#555;transform:scaleX(0.8972);">1,462.50</span>
<span class="t" style="left:844.13px;top:431px;font-size:15.5px;color:#e8792b;transform:scaleX(0.8972);">-8.94%</span>
<span class="t" style="left:1012.13px;top:431px;font-size:15.5px;color:#e8792b;transform:scaleX(0.8972);">-2.79%</span>
<span class="t" style="left:1180.13px;top:431px;font-size:15.5px;color:#555;transform:scaleX(0.8972);">-0.12%</span>
<span class="t" style="left:1289.44px;top:431px;font-size:15.5px;color:#555;transform:scaleX(0.9843);">Jul-16</span>
<div style="left:1143px;top:457px;width:19px;height:25px;background:#5bc8c6;"></div>
<span class="t" style="left:60.95px;top:460px;font-size:15.5px;color:#555;transform:scaleX(0.9850);">Belgium</span>
<span class="t" style="left:326.41px;top:460px;font-size:15.5px;color:#555;transform:scaleX(0.8972);">2,808.90</span>
<span class="t" style="left:494.41px;top:460px;font-size:15.5px;color:#555;transform:scaleX(0.8972);">1,826.20</span>
<svg style="left:556px;top:462px;" width="16" height="16" viewBox="0 0 16 16"><path d="M7.500 0.500L14.500 7.500H10.500V14.500H4.500V7.500H0.500Z" fill="url(#ag)" stroke="url(#as)" stroke-width="1" stroke-linejoin="round"/></svg>
<span class="t" style="left:678.01px;top:460px;font-size:15.5px;color:#555;transform:scaleX(0.8972);">982.70</span>
<span class="t" style="left:841.03px;top:460px;font-size:15.5px;color:#3a9a9c;transform:scaleX(0.8972);">19.23%</span>
<span class="t" style="left:1009.03px;top:460px;font-size:15.5px;color:#3a9a9c;transform:scaleX(0.8972);">22.91%</span>
<span class="t" style="left:1184.76px;top:460px;font-size:15.5px;color:#555;transform:scaleX(0.8972);">0.13%</span>
<span class="t" style="left:1284.27px;top:460px;font-size:15.5px;color:#555;transform:scaleX(0.9843);">May-16</span>
<div style="left:1117px;top:486px;width:24px;height:25px;background:#f79646;"></div>
<span class="t" style="left:60.99px;top:489px;font-size:15.5px;color:#555;transform:scaleX(0.9493);">Brazil</span>
<span class="t" style="left:326.41px;top:489px;font-size:15.5px;color:#555;transform:scaleX(0.8972);">3,423.20</span>
<span class="t" style="left:494.41px;top:489px;font-size:15.5px;color:#555;transform:scaleX(0.8972);">2,571.40</span>
<svg style="left:556px;top:491px;" width="16" height="16" viewBox="0 0 16 16"><path d="M7.500 0.500L14.500 7.500H10.500V14.500H4.500V7.500H0.500Z" fill="url(#ag)" stroke="url(#as)" stroke-width="1" stroke-linejoin="round"/></svg>
<span class="t" style="left:678.01px;top:489px;font-size:15.5px;color:#555;transform:scaleX(0.8972);">851.80</span>
<span class="t" style="left:844.13px;top:489px;font-size:15.5px;color:#e8792b;transform:scaleX(0.8972);">-4.64%</span>
<span class="t" style="left:1009.03px;top:489px;font-size:15.5px;color:#3a9a9c;transform:scaleX(0.8972);">18.83%</span>
<span class="t" style="left:1180.13px;top:489px;font-size:15.5px;color:#555;transform:scaleX(0.8972);">-0.40%</span>
<span class="t" style="left:1284.27px;top:489px;font-size:15.5px;color:#555;transform:scaleX(0.9843);">May-16</span>
<div style="left:1116px;top:515px;width:25px;height:25px;background:#f79646;"></div>
<span class="t" style="left:60.58px;top:518px;font-size:15.5px;color:#555;transform:scaleX(0.9101);">Canada</span>
<span class="t" style="left:318.67px;top:518px;font-size:15.5px;color:#555;transform:scaleX(0.8972);">26,453.10</span>
<span class="t" style="left:486.67px;top:518px;font-size:15.5px;color:#555;transform:scaleX(0.8972);">28,343.10</span>
<svg style="left:556px;top:520px;" width="16" height="16" viewBox="0 0 16 16"><path d="M4.500 0.500H10.500V7.500H14.500L7.500 14.500L0.500 7.500H4.500Z" fill="url(#ag)" stroke="url(#as)" stroke-width="1" stroke-linejoin="round"/></svg>
<span class="t" style="left:661.78px;top:518px;font-size:15.5px;color:#555;transform:scaleX(0.8972);">-1,890.00</span>
<span class="t" style="left:841.03px;top:518px;font-size:15.5px;color:#3a9a9c;transform:scaleX(0.8972);">18.87%</span>
<span class="t" style="left:1016.76px;top:518px;font-size:15.5px;color:#3a9a9c;transform:scaleX(0.8972);">9.94%</span>
<span class="t" style="left:1180.13px;top:518px;font-size:15.5px;color:#555;transform:scaleX(0.8972);">-0.46%</span>
<span class="t" style="left:1284.27px;top:518px;font-size:15.5px;color:#555;transform:scaleX(0.9843);">May-16</span>
<div style="left:1143px;top:544px;width:19px;height:25px;background:#5bc8c6;"></div>
<span class="t" style="left:60.60px;top:547px;font-size:15.5px;color:#555;transform:scaleX(0.8940);">China</span>
<span class="t" style="left:326.41px;top:547px;font-size:15.5px;color:#555;transform:scaleX(0.8972);">8,786.50</span>
<span class="t" style="left:486.67px;top:547px;font-size:15.5px;color:#555;transform:scaleX(0.8972);">36,646.20</span>
<svg style="left:556px;top:549px;" width="16" height="16" viewBox="0 0 16 16"><path d="M4.500 0.500H10.500V7.500H14.500L7.500 14.500L0.500 7.500H4.500Z" fill="url(#ag)" stroke="url(#as)" stroke-width="1" stroke-linejoin="round"/></svg>
<span class="t" style="left:654.04px;top:547px;font-size:15.5px;color:#555;transform:scaleX(0.8972);">-27,859.70</span>
<span class="t" style="left:836.40px;top:547px;font-size:15.5px;color:#e8792b;transform:scaleX(0.8972);">-14.78%</span>
<span class="t" style="left:1016.76px;top:547px;font-size:15.5px;color:#3a9a9c;transform:scaleX(0.8972);">5.18%</span>
<span class="t" style="left:1184.76px;top:547px;font-size:15.5px;color:#555;transform:scaleX(0.8972);">0.14%</span>
<span class="t" style="left:1284.27px;top:547px;font-size:15.5px;color:#555;transform:scaleX(0.9843);">May-16</span>
<div style="left:1143px;top:573px;width:16px;height:25px;background:#5bc8c6;"></div>
<span class="t" style="left:61.08px;top:576px;font-size:15.5px;color:#555;transform:scaleX(0.8837);">France</span>
<span class="t" style="left:326.41px;top:576px;font-size:15.5px;color:#555;transform:scaleX(0.8972);">2,642.30</span>
<span class="t" style="left:494.41px;top:576px;font-size:15.5px;color:#555;transform:scaleX(0.8972);">3,563.70</span>
<svg style="left:556px;top:578px;" width="16" height="16" viewBox="0 0 16 16"><path d="M4.500 0.500H10.500V7.500H14.500L7.500 14.500L0.500 7.500H4.500Z" fill="url(#ag)" stroke="url(#as)" stroke-width="1" stroke-linejoin="round"/></svg>
<span class="t" style="left:673.38px;top:576px;font-size:15.5px;color:#555;transform:scaleX(0.8972);">-921.40</span>
<span class="t" style="left:848.76px;top:576px;font-size:15.5px;color:#3a9a9c;transform:scaleX(0.8972);">8.82%</span>
<span class="t" style="left:1016.76px;top:576px;font-size:15.5px;color:#3a9a9c;transform:scaleX(0.8972);">6.30%</span>
<span class="t" style="left:1184.76px;top:576px;font-size:15.5px;color:#555;transform:scaleX(0.8972);">0.00%</span>
<span class="t" style="left:1284.27px;top:576px;font-size:15.5px;color:#555;transform:scaleX(0.9843);">May-16</span>
<div style="left:1143px;top:602px;width:17px;height:25px;background:#5bc8c6;"></div>
<span class="t" style="left:60.58px;top:605px;font-size:15.5px;color:#555;transform:scaleX(0.9232);">Germany</span>
<span class="t" style="left:326.41px;top:605px;font-size:15.5px;color:#555;transform:scaleX(0.8972);">4,052.50</span>
<span class="t" style="left:494.41px;top:605px;font-size:15.5px;color:#555;transform:scaleX(0.8972);">9,888.30</span>
<svg style="left:556px;top:607px;" width="16" height="16" viewBox="0 0 16 16"><path d="M4.500 0.500H10.500V7.500H14.500L7.500 14.500L0.500 7.500H4.500Z" fill="url(#ag)" stroke="url(#as)" stroke-width="1" stroke-linejoin="round"/></svg>
<span class="t" style="left:661.78px;top:605px;font-size:15.5px;color:#555;transform:scaleX(0.8972);">-5,835.80</span>
<span class="t" style="left:848.76px;top:605px;font-size:15.5px;color:#3a9a9c;transform:scaleX(0.8972);">6.62%</span>
<span class="t" style="left:1016.76px;top:605px;font-size:15.5px;color:#3a9a9c;transform:scaleX(0.8972);">5.20%</span>
<span class="t" style="left:1184.76px;top:605px;font-size:15.5px;color:#555;transform:scaleX(0.8972);">0.04%</span>
<span class="t" style="left:1284.27px;top:605px;font-size:15.5px;color:#555;transform:scaleX(0.9843);">May-16</span>
<div style="left:1120px;top:631px;width:21px;height:25px;background:#f79646;"></div>
<span class="t" style="left:60.65px;top:634px;font-size:15.5px;color:#555;transform:scaleX(0.9829);">Hong Kong</span>
<span class="t" style="left:326.41px;top:634px;font-size:15.5px;color:#555;transform:scaleX(0.8972);">3,385.40</span>
<span class="t" style="left:506.01px;top:634px;font-size:15.5px;color:#555;transform:scaleX(0.8972);">413.00</span>
<svg style="left:556px;top:636px;" width="16" height="16" viewBox="0 0 16 16"><path d="M7.500 0.500L14.500 7.500H10.500V14.500H4.500V7.500H0.500Z" fill="url(#ag)" stroke="url(#as)" stroke-width="1" stroke-linejoin="round"/></svg>
<span class="t" style="left:666.41px;top:634px;font-size:15.5px;color:#555;transform:scaleX(0.8972);">2,972.40</span>
<span class="t" style="left:836.40px;top:634px;font-size:15.5px;color:#e8792b;transform:scaleX(0.8972);">-23.27%</span>
<span class="t" style="left:1016.76px;top:634px;font-size:15.5px;color:#3a9a9c;transform:scaleX(0.8972);">0.34%</span>
<span class="t" style="left:1180.13px;top:634px;font-size:15.5px;color:#555;transform:scaleX(0.8972);">-0.26%</span>
<span class="t" style="left:1284.27px;top:634px;font-size:15.5px;color:#555;transform:scaleX(0.9843);">May-16</span>
<div style="left:1143px;top:660px;width:82px;height:25px;background:#5bc8c6;"></div>
<span class="t" style="left:60.62px;top:663px;font-size:15.5px;color:#555;transform:scaleX(0.9633);">India</span>
<span class="t" style="left:326.41px;top:663px;font-size:15.5px;color:#555;transform:scaleX(0.8972);">1,935.80</span>
<span class="t" style="left:494.41px;top:663px;font-size:15.5px;color:#555;transform:scaleX(0.8972);">4,201.50</span>
<svg style="left:556px;top:665px;" width="16" height="16" viewBox="0 0 16 16"><path d="M4.500 0.500H10.500V7.500H14.500L7.500 14.500L0.500 7.500H4.500Z" fill="url(#ag)" stroke="url(#as)" stroke-width="1" stroke-linejoin="round"/></svg>
<span class="t" style="left:661.78px;top:663px;font-size:15.5px;color:#555;transform:scaleX(0.8972);">-2,265.70</span>
<span class="t" style="left:836.40px;top:663px;font-size:15.5px;color:#e8792b;transform:scaleX(0.8972);">-13.34%</span>
<span class="t" style="left:1009.03px;top:663px;font-size:15.5px;color:#3a9a9c;transform:scaleX(0.8972);">51.52%</span>
<span class="t" style="left:1184.76px;top:663px;font-size:15.5px;color:#555;transform:scaleX(0.8972);">3.20%</span>
<span class="t" style="left:1284.27px;top:663px;font-size:15.5px;color:#555;transform:scaleX(0.9843);">May-16</span>
<div style="left:1143px;top:689px;width:17px;height:25px;background:#5bc8c6;"></div>
<span class="t" style="left:60.59px;top:692px;font-size:15.5px;color:#555;transform:scaleX(0.9864);">Italy</span>
<span class="t" style="left:326.41px;top:692px;font-size:15.5px;color:#555;transform:scaleX(0.8972);">1,581.10</span>
<span class="t" style="left:494.41px;top:692px;font-size:15.5px;color:#555;transform:scaleX(0.8972);">3,292.10</span>
<svg style="left:556px;top:694px;" width="16" height="16" viewBox="0 0 16 16"><path d="M4.500 0.500H10.500V7.500H14.500L7.500 14.500L0.500 7.500H4.500Z" fill="url(#ag)" stroke="url(#as)" stroke-width="1" stroke-linejoin="round"/></svg>
<span class="t" style="left:662.81px;top:692px;font-size:15.5px;color:#555;transform:scaleX(0.8972);">-1,711.00</span>
<span class="t" style="left:841.03px;top:692px;font-size:15.5px;color:#3a9a9c;transform:scaleX(0.8972);">19.30%</span>
<span class="t" style="left:1009.03px;top:692px;font-size:15.5px;color:#3a9a9c;transform:scaleX(0.8972);">10.67%</span>
<span class="t" style="left:1184.76px;top:692px;font-size:15.5px;color:#555;transform:scaleX(0.8972);">0.04%</span>
<span class="t" style="left:1284.27px;top:692px;font-size:15.5px;color:#555;transform:scaleX(0.9843);">May-16</span>
<div style="left:1124px;top:718px;width:17px;height:25px;background:#f79646;"></div>
<span class="t" style="left:60.78px;top:721px;font-size:15.5px;color:#555;transform:scaleX(0.9077);">Japan</span>
<span class="t" style="left:326.41px;top:721px;font-size:15.5px;color:#555;transform:scaleX(0.8972);">5,785.20</span>
<span class="t" style="left:487.71px;top:721px;font-size:15.5px;color:#555;transform:scaleX(0.8972);">11,190.40</span>
<svg style="left:556px;top:723px;" width="16" height="16" viewBox="0 0 16 16"><path d="M4.500 0.500H10.500V7.500H14.500L7.500 14.500L0.500 7.500H4.500Z" fill="url(#ag)" stroke="url(#as)" stroke-width="1" stroke-linejoin="round"/></svg>
<span class="t" style="left:661.78px;top:721px;font-size:15.5px;color:#555;transform:scaleX(0.8972);">-5,405.20</span>
<span class="t" style="left:844.13px;top:721px;font-size:15.5px;color:#e8792b;transform:scaleX(0.8972);">-3.92%</span>
<span class="t" style="left:1012.13px;top:721px;font-size:15.5px;color:#e8792b;transform:scaleX(0.8972);">-5.29%</span>
<span class="t" style="left:1180.13px;top:721px;font-size:15.5px;color:#555;transform:scaleX(0.8972);">-0.07%</span>
<span class="t" style="left:1284.27px;top:721px;font-size:15.5px;color:#555;transform:scaleX(0.9843);">May-16</span>
<div style="left:1143px;top:747px;width:24px;height:25px;background:#5bc8c6;"></div>
<span class="t" style="left:60.65px;top:750px;font-size:15.5px;color:#555;transform:scaleX(0.9836);">Mexico</span>
<span class="t" style="left:318.67px;top:750px;font-size:15.5px;color:#555;transform:scaleX(0.8972);">19,240.50</span>
<span class="t" style="left:486.67px;top:750px;font-size:15.5px;color:#555;transform:scaleX(0.8972);">24,540.60</span>
<svg style="left:556px;top:752px;" width="16" height="16" viewBox="0 0 16 16"><path d="M4.500 0.500H10.500V7.500H14.500L7.500 14.500L0.500 7.500H4.500Z" fill="url(#ag)" stroke="url(#as)" stroke-width="1" stroke-linejoin="round"/></svg>
<span class="t" style="left:661.78px;top:750px;font-size:15.5px;color:#555;transform:scaleX(0.8972);">-5,300.10</span>
<span class="t" style="left:841.03px;top:750px;font-size:15.5px;color:#3a9a9c;transform:scaleX(0.8972);">17.45%</span>
<span class="t" style="left:1009.03px;top:750px;font-size:15.5px;color:#3a9a9c;transform:scaleX(0.8972);">21.01%</span>
<span class="t" style="left:1184.76px;top:750px;font-size:15.5px;color:#555;transform:scaleX(0.8972);">0.36%</span>
<span class="t" style="left:1284.27px;top:750px;font-size:15.5px;color:#555;transform:scaleX(0.9843);">May-16</span>
<div style="left:1122px;top:776px;width:19px;height:25px;background:#f79646;"></div>
<span class="t" style="left:60.68px;top:779px;font-size:15.5px;color:#555;transform:scaleX(0.9591);">Netherlands</span>
<span class="t" style="left:326.41px;top:779px;font-size:15.5px;color:#555;transform:scaleX(0.8972);">3,442.50</span>
<span class="t" style="left:494.41px;top:779px;font-size:15.5px;color:#555;transform:scaleX(0.8972);">1,538.40</span>
<svg style="left:556px;top:781px;" width="16" height="16" viewBox="0 0 16 16"><path d="M7.500 0.500L14.500 7.500H10.500V14.500H4.500V7.500H0.500Z" fill="url(#ag)" stroke="url(#as)" stroke-width="1" stroke-linejoin="round"/></svg>
<span class="t" style="left:666.41px;top:779px;font-size:15.5px;color:#555;transform:scaleX(0.8972);">1,904.10</span>
<span class="t" style="left:836.40px;top:779px;font-size:15.5px;color:#e8792b;transform:scaleX(0.8972);">-10.83%</span>
<span class="t" style="left:1012.13px;top:779px;font-size:15.5px;color:#e8792b;transform:scaleX(0.8972);">-3.72%</span>
<span class="t" style="left:1180.13px;top:779px;font-size:15.5px;color:#555;transform:scaleX(0.8972);">-0.16%</span>
<span class="t" style="left:1284.27px;top:779px;font-size:15.5px;color:#555;transform:scaleX(0.9843);">May-16</span>
<div style="left:1143px;top:805px;width:28px;height:25px;background:#5bc8c6;"></div>
<span class="t" style="left:60.63px;top:808px;font-size:15.5px;color:#555;transform:scaleX(0.9483);">Saudi Arabia</span>
<span class="t" style="left:326.41px;top:808px;font-size:15.5px;color:#555;transform:scaleX(0.8972);">1,787.60</span>
<span class="t" style="left:494.41px;top:808px;font-size:15.5px;color:#555;transform:scaleX(0.8972);">4,493.00</span>
<svg style="left:556px;top:810px;" width="16" height="16" viewBox="0 0 16 16"><path d="M4.500 0.500H10.500V7.500H14.500L7.500 14.500L0.500 7.500H4.500Z" fill="url(#ag)" stroke="url(#as)" stroke-width="1" stroke-linejoin="round"/></svg>
<span class="t" style="left:661.78px;top:808px;font-size:15.5px;color:#555;transform:scaleX(0.8972);">-2,705.40</span>
<span class="t" style="left:844.13px;top:808px;font-size:15.5px;color:#e8792b;transform:scaleX(0.8972);">-6.78%</span>
<span class="t" style="left:1009.03px;top:808px;font-size:15.5px;color:#3a9a9c;transform:scaleX(0.8972);">22.76%</span>
<span class="t" style="left:1184.76px;top:808px;font-size:15.5px;color:#555;transform:scaleX(0.8972);">0.55%</span>
<span class="t" style="left:1284.27px;top:808px;font-size:15.5px;color:#555;transform:scaleX(0.9843);">May-16</span>
<div style="left:1125px;top:834px;width:16px;height:25px;background:#f79646;"></div>
<span class="t" style="left:60.62px;top:837px;font-size:15.5px;color:#555;transform:scaleX(0.9600);">Singapore</span>
<span class="t" style="left:326.41px;top:837px;font-size:15.5px;color:#555;transform:scaleX(0.8972);">2,678.70</span>
<span class="t" style="left:494.41px;top:837px;font-size:15.5px;color:#555;transform:scaleX(0.8972);">1,467.20</span>
<svg style="left:556px;top:839px;" width="16" height="16" viewBox="0 0 16 16"><path d="M7.500 0.500L14.500 7.500H10.500V14.500H4.500V7.500H0.500Z" fill="url(#ag)" stroke="url(#as)" stroke-width="1" stroke-linejoin="round"/></svg>
<span class="t" style="left:667.44px;top:837px;font-size:15.5px;color:#555;transform:scaleX(0.8972);">1,211.50</span>
<span class="t" style="left:844.13px;top:837px;font-size:15.5px;color:#e8792b;transform:scaleX(0.8972);">-1.70%</span>
<span class="t" style="left:1012.13px;top:837px;font-size:15.5px;color:#e8792b;transform:scaleX(0.8972);">-0.05%</span>
<span class="t" style="left:1180.13px;top:837px;font-size:15.5px;color:#555;transform:scaleX(0.8972);">-0.04%</span>
<span class="t" style="left:1284.27px;top:837px;font-size:15.5px;color:#555;transform:scaleX(0.9843);">May-16</span>
<div style="left:1143px;top:863px;width:40px;height:25px;background:#5bc8c6;"></div>
<span class="t" style="left:60.65px;top:866px;font-size:15.5px;color:#555;transform:scaleX(0.9302);">South Korea</span>
<span class="t" style="left:327.44px;top:866px;font-size:15.5px;color:#555;transform:scaleX(0.8972);">3,211.50</span>
<span class="t" style="left:494.41px;top:866px;font-size:15.5px;color:#555;transform:scaleX(0.8972);">5,669.90</span>
<svg style="left:556px;top:868px;" width="16" height="16" viewBox="0 0 16 16"><path d="M4.500 0.500H10.500V7.500H14.500L7.500 14.500L0.500 7.500H4.500Z" fill="url(#ag)" stroke="url(#as)" stroke-width="1" stroke-linejoin="round"/></svg>
<span class="t" style="left:661.78px;top:866px;font-size:15.5px;color:#555;transform:scaleX(0.8972);">-2,458.40</span>
<span class="t" style="left:844.13px;top:866px;font-size:15.5px;color:#e8792b;transform:scaleX(0.8972);">-7.00%</span>
<span class="t" style="left:1009.03px;top:866px;font-size:15.5px;color:#3a9a9c;transform:scaleX(0.8972);">23.36%</span>
<span class="t" style="left:1184.76px;top:866px;font-size:15.5px;color:#555;transform:scaleX(0.8972);">1.15%</span>
<span class="t" style="left:1284.27px;top:866px;font-size:15.5px;color:#555;transform:scaleX(0.9843);">May-16</span>
<div style="left:1143px;top:892px;width:76px;height:25px;background:#5bc8c6;"></div>
<span class="t" style="left:60.63px;top:895px;font-size:15.5px;color:#555;transform:scaleX(0.9590);">Switzerland</span>
<span class="t" style="left:326.41px;top:895px;font-size:15.5px;color:#555;transform:scaleX(0.8972);">2,150.80</span>
<span class="t" style="left:494.41px;top:895px;font-size:15.5px;color:#555;transform:scaleX(0.8972);">3,249.10</span>
<svg style="left:556px;top:897px;" width="16" height="16" viewBox="0 0 16 16"><path d="M4.500 0.500H10.500V7.500H14.500L7.500 14.500L0.500 7.500H4.500Z" fill="url(#ag)" stroke="url(#as)" stroke-width="1" stroke-linejoin="round"/></svg>
<span class="t" style="left:661.78px;top:895px;font-size:15.5px;color:#555;transform:scaleX(0.8972);">-1,098.30</span>
<span class="t" style="left:841.03px;top:895px;font-size:15.5px;color:#3a9a9c;transform:scaleX(0.8972);">16.70%</span>
<span class="t" style="left:1009.03px;top:895px;font-size:15.5px;color:#3a9a9c;transform:scaleX(0.8972);">53.06%</span>
<span class="t" style="left:1184.76px;top:895px;font-size:15.5px;color:#555;transform:scaleX(0.8972);">2.93%</span>
<span class="t" style="left:1284.27px;top:895px;font-size:15.5px;color:#555;transform:scaleX(0.9843);">May-16</span>
<div style="left:1141px;top:427px;width:1px;height:492px;border-left:1px dashed #000;"></div>
<div style="left:1414px;top:260px;width:17px;height:714px;background:#f0f0f0;"></div>
<div style="left:1414px;top:277px;width:17px;height:653px;background:#e1e1e1;"></div>
</section>
<footer>
<div style="left:9px;top:974px;width:1422px;height:17px;background:#f0f0f0;"></div>
<div style="left:9px;top:974px;width:842px;height:1px;background:#ababab;"></div>
<div style="left:9px;top:975px;width:72px;height:16px;background:#fff;"></div>
<div style="left:81px;top:975px;width:1px;height:16px;background:#ababab;"></div>
<div style="left:82px;top:974px;width:56px;height:17px;background:#fff;"></div>
<div style="left:138px;top:974px;width:1px;height:17px;background:#ababab;"></div>
<span class="t" style="left:91.99px;top:973px;font-size:11px;color:#1e1e1e;transform:scaleX(1.0199);">Sheet1</span>
<svg style="left:150px;top:979px;" width="8" height="8" viewBox="0 0 8 8"><path d="M0 3.5h7M3.5 0v7" stroke="#3c3c3c" stroke-width="1" fill="none"/></svg>
<svg style="left:12px;top:978px;" width="68" height="9" viewBox="0 0 68 9"><path d="M1 1.500h1v6h-1z" fill="#a8a8a8"/><path d="M3 4.500l3-3v6zM7 4.500l3-3v6z" fill="#a8a8a8"/><path d="M22 4.500l3-3v6z" fill="#a8a8a8"/><path d="M43.500 4.500l-3-3v6z" fill="#a8a8a8"/><path d="M58.500 4.500l-3-3v6zM62.500 4.500l-3-3v6z" fill="#a8a8a8"/><path d="M64 1.500h1v6h-1z" fill="#a8a8a8"/></svg>
<div style="left:850px;top:974px;width:1px;height:17px;background:#ababab;"></div>
<div style="left:878px;top:974px;width:468px;height:17px;background:#e1e1e1;"></div>
<svg style="left:0px;top:0px;" width="1440" height="1000" viewBox="0 0 1440 1000"><path d="M871 979v6l-4.500-3z M1403 979v6l4.500-3z M1419 963h6l-3 4.500z M1419 270h6l-3-4.500z" fill="#505050"/></svg>
</footer>
</body>
</html>
